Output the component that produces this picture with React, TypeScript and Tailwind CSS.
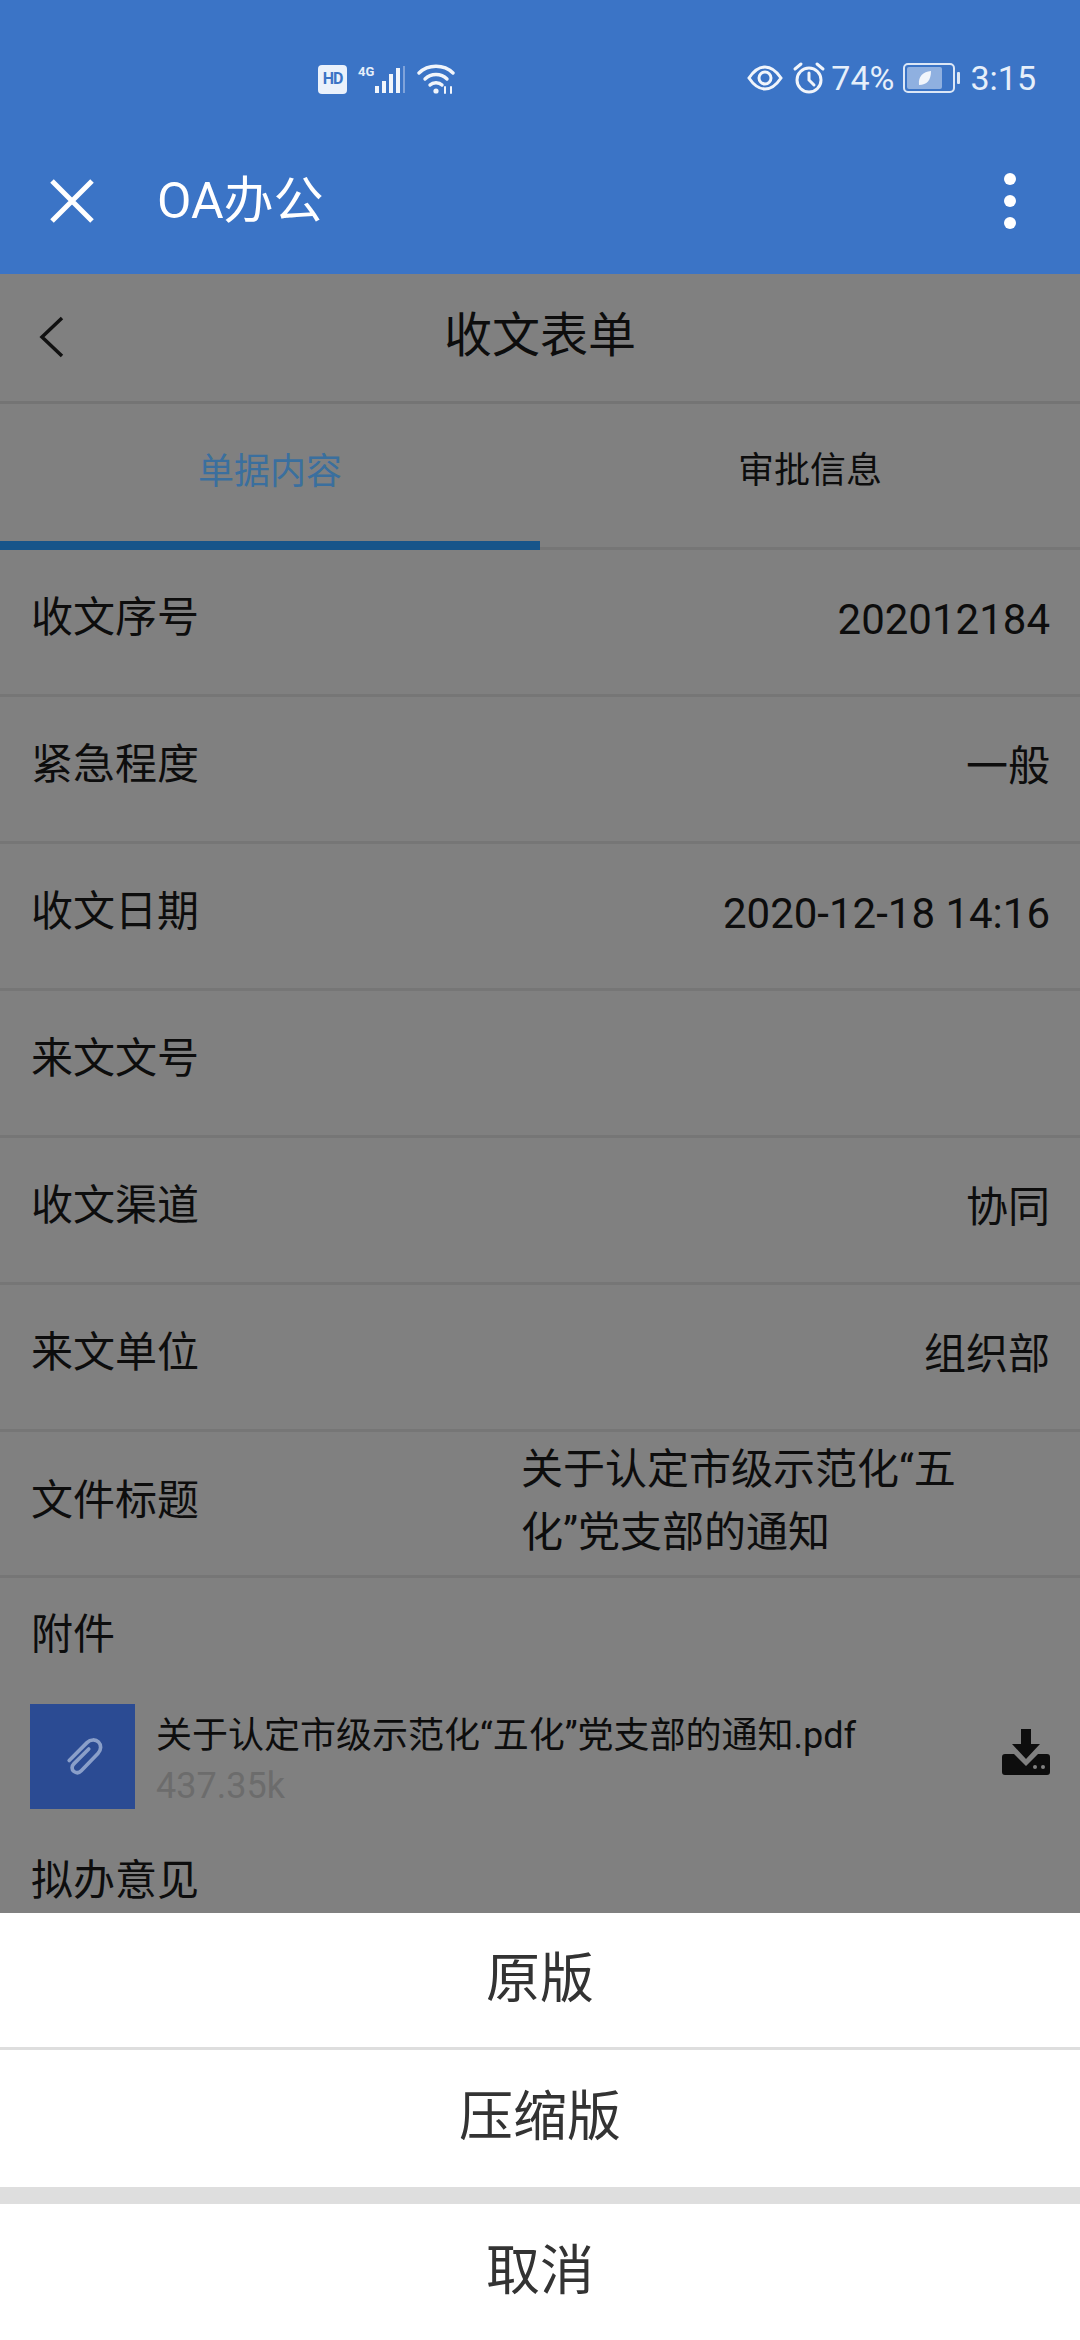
const font = "font-['Roboto','Noto_Sans_CJK_SC',sans-serif]";

const rows = [
	{ label: "收文序号", value: "202012184" },
	{ label: "紧急程度", value: "一般" },
	{ label: "收文日期", value: "2020-12-18 14:16" },
	{ label: "来文文号", value: "" },
	{ label: "收文渠道", value: "协同" },
	{ label: "来文单位", value: "组织部" },
];

function StatusBar() {
	return (
		<div className="flex h-[100px] items-end justify-between pb-[5px] pl-[318px] pr-[44px] text-[#e6effa]">
			<div className="flex items-center">
				<div className={`flex h-[29px] w-[29px] items-center justify-center rounded-[4px] bg-[#eaf1fb] text-[16px] font-bold tracking-[-1px] text-[#3b74c6] ${font}`}>
					HD
				</div>
				<span className={`ml-[11px] h-[30px] w-[17px] text-[13px] font-bold leading-[16px] ${font}`}>4G</span>
				<svg width="33" height="30" viewBox="17 0 33 30" fill="none">
					<g fill="#f1f5fb">
						<rect x="17" y="22" width="4" height="7" />
						<rect x="24" y="17" width="4" height="12" />
						<rect x="31" y="10" width="4" height="19" />
						<rect x="38" y="4" width="4" height="25" />
					</g>
					<rect x="45" y="2" width="2" height="27" fill="#7fa3da" />
				</svg>
				<svg width="40" height="32" viewBox="0 0 40 32" className="ml-[9px]" fill="none" stroke="#f1f5fb" strokeWidth="3.4" strokeLinecap="round">
					<path d="M2 10C11 1 27 1 36 10" />
					<path d="M8 16C14 10 24 10 30 16" />
					<path d="M13 22C16 19 22 19 25 22" />
					<circle cx="19" cy="28" r="2.6" fill="#f1f5fb" stroke="none" />
					<path d="M28 24v6M34 30v-6" strokeWidth="2" />
				</svg>
			</div>
			<div className={`flex items-center text-[34px] leading-[32px] ${font}`}>
				<svg width="36" height="26" viewBox="0 0 36 26" fill="none" stroke="#f1f5fb" strokeWidth="3">
					<path d="M2 13C8 4 13 2 18 2s10 2 16 11C28 22 23 24 18 24S8 22 2 13Z" />
					<circle cx="18" cy="13" r="6" />
				</svg>
				<svg width="34" height="34" viewBox="0 0 34 34" className="ml-[9px]" fill="none" stroke="#f1f5fb" strokeWidth="3" strokeLinecap="round">
					<circle cx="17" cy="19" r="12" />
					<path d="M17 12v7l5 5" />
					<path d="M3 8l6-5M31 8l-6-5" />
				</svg>
				<span className="ml-[5px]">74%</span>
				<svg width="58" height="30" viewBox="0 0 58 30" className="ml-[9px]" fill="none">
					<rect x="1" y="1" width="50" height="28" rx="4" stroke="#dce7f6" strokeWidth="2" />
					<rect x="4" y="4" width="35" height="22" rx="2" fill="#8fb0e0" />
					<path d="M16 22c-1-9 4-13 12-14 0 9-4 14-12 14Z" fill="#f1f5fb" />
					<rect x="54" y="9" width="3" height="12" rx="1" fill="#dce7f6" />
				</svg>
				<span className="ml-[9px]">3:15</span>
			</div>
		</div>
	);
}

function AppBar() {
	return (
		<div className="flex h-[174px] items-start bg-[#3b74c6] pl-[50px] pr-[64px] pt-[53px] text-white">
			<div className="flex h-[96px] w-full items-center">
				<svg width="44" height="44" viewBox="0 0 44 44" fill="none" stroke="white" strokeWidth="5">
					<path d="M2 2l40 40M42 2L2 42" />
				</svg>
				<span className={`ml-[63px] text-[50px] leading-none ${font}`}>OA办公</span>
				<div className="ml-auto flex flex-col gap-[10px]">
					<div className="h-[12px] w-[12px] rounded-full bg-white" />
					<div className="h-[12px] w-[12px] rounded-full bg-white" />
					<div className="h-[12px] w-[12px] rounded-full bg-white" />
				</div>
			</div>
		</div>
	);
}

function Row({ label, value }: { label: string; value: string }) {
	return (
		<div className="flex h-[147px] items-center justify-between border-b-[3px] border-[#767676] pb-[8px] pl-[31px] pr-[30px]">
			<span className="text-[42px] leading-none">{label}</span>
			<span className="pt-[4px] text-[42px] leading-none">{value}</span>
		</div>
	);
}

function PaperclipIcon() {
	return (
		<svg width="46" height="46" viewBox="0 0 40 40" fill="none" stroke="#8a9fc9" strokeWidth="3.2" strokeLinecap="round">
			<path d="M25 13 12 26c-2 2-2 5 0 6.5s4.5 1.5 6.5-.5L33 17c3-3.200 3-7.500.5-10s-7-2.500-10 .5L8 23" />
		</svg>
	);
}

function Form() {
	return (
		<div className={`flex-1 overflow-hidden bg-[#808080] text-[#0d0d0d] ${font}`}>
			<div className="relative flex h-[130px] items-center justify-center border-b-[3px] border-[#747474] pb-[4px]">
				<svg width="26" height="42" viewBox="0 0 26 42" className="absolute left-[38px] top-[42px]" fill="none" stroke="#111" strokeWidth="3.5">
					<path d="M24 2L4 21l20 19" />
				</svg>
				<span className="text-[48px] leading-none">收文表单</span>
			</div>
			<div className="flex h-[146px] border-b-[3px] border-[#767676] text-[36px] leading-none">
				<div className="-mb-[3px] flex w-1/2 items-center justify-center border-b-[9px] border-[#17558a] pb-[2px] text-[#3a6f9e]">单据内容</div>
				<div className="flex w-1/2 items-center justify-center pb-[9px]">审批信息</div>
			</div>
			{rows.map((row) => (
				<Row key={row.label} label={row.label} value={row.value} />
			))}
			<div className="flex h-[146px] items-center border-b-[3px] border-[#767676] pb-[6px] pl-[31px]">
				<span className="text-[42px] leading-none">文件标题</span>
				<p className="ml-[322px] w-[450px] text-[42px] leading-[63px]">关于认定市级示范化“五化”党支部的通知</p>
			</div>
			<div className="pl-[31px] pt-[33px] text-[42px] leading-[48px]">附件</div>
			<div className="mt-[45px] flex h-[105px] items-start pl-[30px] pr-[30px]">
				<div className="flex h-[105px] w-[105px] shrink-0 items-center justify-center bg-[#2b4b93]">
					<PaperclipIcon />
				</div>
				<div className="ml-[21px] flex-1">
					<div className="mt-[11px] text-[36px] leading-[42px]">关于认定市级示范化“五化”党支部的通知.pdf</div>
					<div className="mt-[8px] text-[36px] leading-[42px] text-[#6c6c6c]">437.35k</div>
				</div>
				<svg width="48" height="46" viewBox="0 0 48 46" className="mt-[25px]" fill="#0d0d0d">
					<path d="M19 0h10v15h9L24 30 10 15h9Z" />
					<path d="M0 28a3 3 0 0 1 3-3h9l12 12 12-12h9a3 3 0 0 1 3 3v15a3 3 0 0 1-3 3H3a3 3 0 0 1-3-3Z" />
					<circle cx="33" cy="38" r="2" fill="#808080" />
					<circle cx="41" cy="38" r="2" fill="#808080" />
				</svg>
			</div>
			<div className="pl-[31px] pt-[48px] text-[42px] leading-[48px]">拟办意见</div>
		</div>
	);
}

function ActionSheet() {
	return (
		<div className={`bg-white text-[54px] leading-none text-[#333] ${font}`}>
			<div className="flex h-[137px] items-center justify-center border-b-[3px] border-[#dedede]">原版</div>
			<div className="flex h-[137px] items-center justify-center pb-[2px]">压缩版</div>
			<div className="h-[17px] bg-[#dedede]" />
			<div className="flex h-[136px] items-center justify-center">取消</div>
		</div>
	);
}

export default function App() {
	return (
		<div className="flex h-[2340px] w-[1080px] flex-col overflow-hidden bg-[#3b74c6]">
			<StatusBar />
			<AppBar />
			<Form />
			<ActionSheet />
		</div>
	);
}
